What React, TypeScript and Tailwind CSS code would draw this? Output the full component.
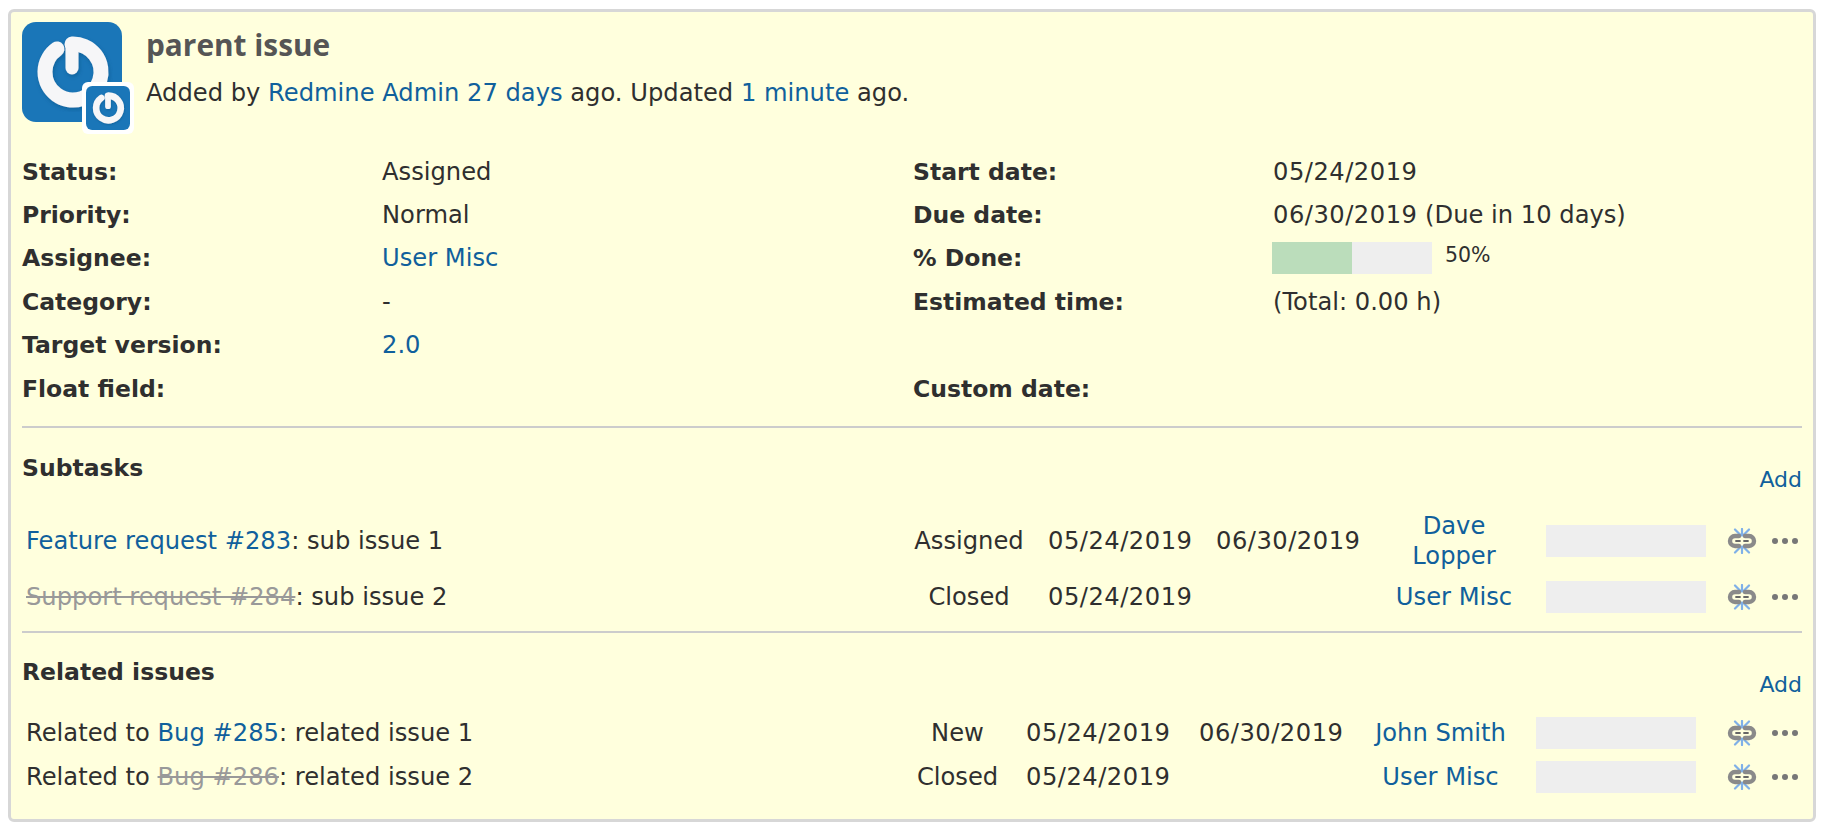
const link = "text-[#10609c]";

function Power({ size }: { size: number }) {
  return (
    <svg width={size} height={size} viewBox="0 0 100 100" className="block">
      <defs>
        <filter id="sh" x="-20%" y="-20%" width="140%" height="140%">
          <feDropShadow dx="1" dy="2" stdDeviation="2" floodColor="#0b4a78" floodOpacity="0.45" />
        </filter>
      </defs>
      <rect width="100" height="100" rx="14" fill="#1a76b8" />
      <g filter="url(#sh)" fill="none" stroke="#f6f6f8" strokeLinecap="round">
        <path d="M35 27 A28 28 0 1 0 50 22" strokeWidth="15" />
        <path d="M50 22 V46" strokeWidth="13" />
      </g>
    </svg>
  );
}

function BrokenLink() {
  return (
    <svg width="30" height="26" viewBox="0 0 30 26" className="block">
      <g stroke="#7fb0e8" strokeWidth="2.2" fill="none" strokeLinecap="round">
        <path d="M8 1.5 L14 7.5 M22 1.5 L16 7.5 M15 1 V6" />
        <path d="M8 24.5 L14 18.5 M22 24.5 L16 18.5 M15 25 V20" />
      </g>
      <g fill="none" stroke="#8a8a8a" strokeWidth="4.4" strokeLinecap="round">
        <path d="M12 8 H8 A5 5 0 0 0 8 18 H12" />
        <path d="M18 8 H22 A5 5 0 0 1 22 18 H18" />
      </g>
      <path d="M9 13 H13 M17 13 H21" stroke="#666" strokeWidth="1.8" strokeLinecap="round" />
    </svg>
  );
}

function Dots() {
  return (
    <div className="flex gap-[4px] items-center">
      <span className="w-[6px] h-[6px] rounded-full bg-[#777]" />
      <span className="w-[6px] h-[6px] rounded-full bg-[#777]" />
      <span className="w-[6px] h-[6px] rounded-full bg-[#777]" />
    </div>
  );
}

function Date({ children }: { children?: React.ReactNode }) {
  return <span className="tracking-[0.5px]">{children}</span>;
}

function Field({ label, value }: { label: string; value?: React.ReactNode }) {
  return (
    <div className="flex items-center h-[43.4px]">
      <div className="w-[360px] font-bold text-[23.5px]">{label}</div>
      <div>{value}</div>
    </div>
  );
}

function Actions() {
  return (
    <div className="flex items-center justify-end pr-[4px] gap-[15px]">
      <BrokenLink />
      <Dots />
    </div>
  );
}

function Row({ subject, status, start, due, who, cols, h, startPad }: { subject: React.ReactNode; status: string; start: string; due?: string; who: React.ReactNode; cols: string; h: string; startPad: string }) {
  return (
    <div className={`grid items-center ${cols} ${h}`}>
      <div className="pl-[4px]">{subject}</div>
      <div className="text-center pl-[2px]">{status}</div>
      <div className={startPad}><Date>{start}</Date></div>
      <div><Date>{due}</Date></div>
      <div className={`text-center leading-[30px] ${link}`}>{who}</div>
      <div className="h-[32px] bg-[#eeeeee]" />
      <Actions />
    </div>
  );
}

const subCols = "grid-cols-[883px_126px_185px_146px_184px_160px_96px]";
const relCols = "grid-cols-[883px_103px_191px_146px_191px_160px_106px]";

export default function App() {
  return (
    <div className="min-h-screen bg-white pt-[9px] px-[8px] text-[24.2px] leading-[30px] text-[#2f2f2f]" style={{ fontFamily: '"DejaVu Sans", Verdana, sans-serif' }}>
      <div className="w-[1808px] h-[813px] border-[3px] border-[#d7d7d7] rounded-[6px] bg-[#ffffdd] pl-[11px] pr-[10px] pt-[10px]">
        <div className="flex">
          <div className="relative w-[100px] h-[100px] shrink-0">
            <Power size={100} />
            <div className="absolute left-[60px] top-[60px] bg-white rounded-[6px] p-[4px]">
              <Power size={44} />
            </div>
          </div>
          <div className="ml-[24px]">
            <h2 className="mt-[6px] text-[29.8px] leading-[34px] font-bold text-[#555555]" style={{ fontFamily: '"Open Sans", sans-serif' }}>parent issue</h2>
            <p className="mt-[16px]">Added by <span className={link}>Redmine Admin</span> <span className={link}>27 days</span> ago. Updated <span className={link}>1 minute</span> ago.</p>
          </div>
        </div>

        <div className="grid grid-cols-[891px_1fr] mt-[28px]">
          <div>
            <Field label="Status:" value="Assigned" />
            <Field label="Priority:" value="Normal" />
            <Field label="Assignee:" value={<span className={link}>User Misc</span>} />
            <Field label="Category:" value="-" />
            <Field label="Target version:" value={<span className={link}>2.0</span>} />
            <Field label="Float field:" />
          </div>
          <div>
            <Field label="Start date:" value={<Date>05/24/2019</Date>} />
            <Field label="Due date:" value={<><Date>06/30/2019</Date> (Due in 10 days)</>} />
            <Field
              label="% Done:"
              value={
                <div className="flex items-start -ml-[1px]">
                  <div className="flex w-[160px] h-[32px] bg-[#eeeeee]">
                    <div className="w-[80px] bg-[#bbddbb]" />
                  </div>
                  <span className="ml-[13px] text-[20.5px] leading-[26px]">50%</span>
                </div>
              }
            />
            <Field label="Estimated time:" value="(Total: 0.00 h)" />
            <Field label=" " />
            <Field label="Custom date:" />
          </div>
        </div>

        <div className="mt-[16px] border-t-2 border-[#cccccc] mr-[1px]" />
        <div className="flex justify-between pt-[25px]">
          <div className="font-bold text-[23.5px]">Subtasks</div>
          <div className={`mt-[12px] mr-[1px] text-[22px] ${link}`}>Add</div>
        </div>
        <div className="mt-[15px]">
          <Row cols={subCols} startPad="pl-[17px]" h="h-[62px]" subject={<><span className={link}>Feature request #283</span>: sub issue 1</>} status="Assigned" start="05/24/2019" due="06/30/2019" who={<>Dave<br />Lopper</>} />
          <Row cols={subCols} startPad="pl-[17px]" h="h-[49px]" subject={<><span className="line-through text-[#999999]">Support request #284</span>: sub issue 2</>} status="Closed" start="05/24/2019" who="User Misc" />
        </div>

        <div className="mt-[10px] border-t-2 border-[#cccccc] mr-[1px]" />
        <div className="flex justify-between pt-[24px]">
          <div className="font-bold text-[23.5px]">Related issues</div>
          <div className={`mt-[13px] mr-[1px] text-[22px] ${link}`}>Add</div>
        </div>
        <div className="mt-[11px]">
          <Row cols={relCols} startPad="pl-[18px]" h="h-[44px]" subject={<>Related to <span className={link}>Bug #285</span>: related issue 1</>} status="New" start="05/24/2019" due="06/30/2019" who="John Smith" />
          <Row cols={relCols} startPad="pl-[18px]" h="h-[44px]" subject={<>Related to <span className="line-through text-[#999999]">Bug #286</span>: related issue 2</>} status="Closed" start="05/24/2019" who="User Misc" />
        </div>
      </div>
    </div>
  );
}
